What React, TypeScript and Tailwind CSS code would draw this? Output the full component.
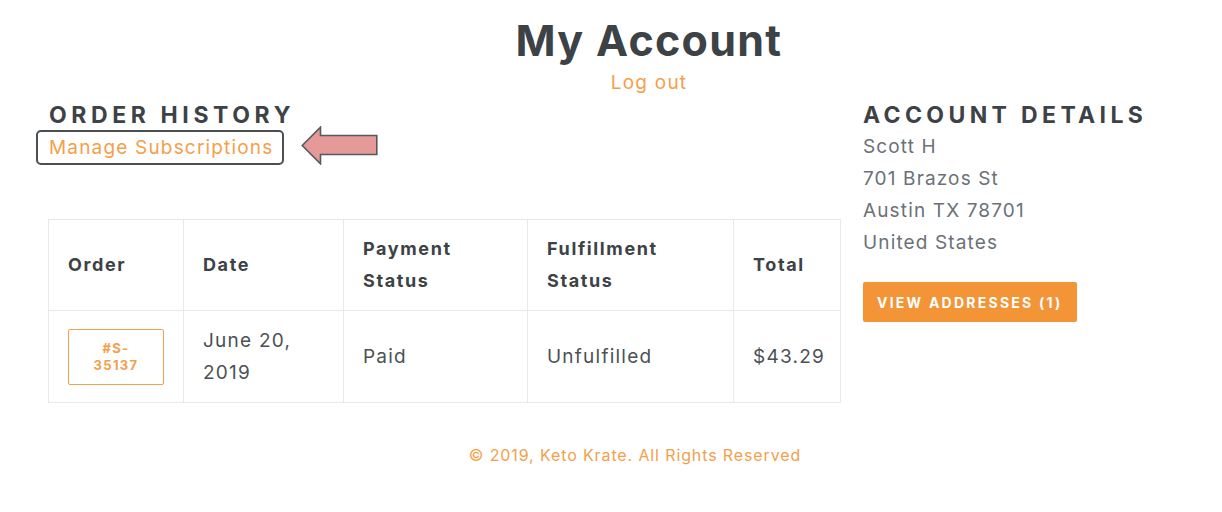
import * as React from "react";

const ORDERS = [
  {
    id: "#S-35137",
    date: "June 20, 2019",
    payment: "Paid",
    fulfillment: "Unfulfilled",
    total: "$43.29",
  },
];

const ADDRESS = ["Scott H", "701 Brazos St", "Austin TX 78701", "United States"];

function PointerArrow(): React.JSX.Element {
  return (
    <svg width="77" height="39" viewBox="0 0 77 39" aria-hidden="true" className="ml-[17px] mt-[-3px]">
      <path
        d="M1.2 19.5 L19.5 1.2 L19.5 9.5 L75.8 9.5 L75.8 28.5 L19.5 28.5 L19.5 37.8 Z"
        fill="#e59a99"
        stroke="#555a5e"
        strokeWidth="1.6"
      />
    </svg>
  );
}

export default function App(): React.JSX.Element {
  return (
    <div className="min-h-[512px] bg-white text-[#3d4246] [font-family:Inter,'Liberation_Sans',sans-serif]">
      <header className="flex flex-col items-center pt-[14px] pl-[76px]">
        <h1 className="text-[43px] font-bold leading-[52px] tracking-[0.03em]">My Account</h1>
        <a className="mt-[4px] text-[19px] leading-[26px] tracking-[0.065em] text-[#f4a04a]">Log out</a>
      </header>

      <main className="flex gap-[22px] pl-[48px] pt-[4px]">
        <section className="w-[793px]">
          <h2 className="pl-[1px] text-[23px] font-bold leading-[30px] tracking-[0.2em]">ORDER HISTORY</h2>
          <div className="mt-[-1px] flex items-center">
            <a className="ml-[-12px] rounded-[5px] border-2 border-[#4a4f53] pl-[11px] pr-[9px] py-[1px] text-[19px] leading-[29px] tracking-[0.062em] text-[#f4a04a]">
              Manage Subscriptions
            </a>
            <PointerArrow />
          </div>

          <table className="mt-[54px] w-full table-fixed border-collapse border border-[#e8e9eb] text-left">
            <thead>
              <tr className="h-[91px] text-[18px] font-bold leading-[32px] tracking-[0.09em]">
                <th className="w-[135px] border border-[#e8e9eb] px-[19px]">Order</th>
                <th className="w-[160px] border border-[#e8e9eb] px-[19px]">Date</th>
                <th className="w-[184px] border border-[#e8e9eb] px-[19px]">
                  Payment
                  <br />
                  Status
                </th>
                <th className="w-[206px] border border-[#e8e9eb] px-[19px]">
                  Fulfillment
                  <br />
                  Status
                </th>
                <th className="border border-[#e8e9eb] px-[19px]">Total</th>
              </tr>
            </thead>
            <tbody>
              {ORDERS.map((order) => (
                <tr key={order.id} className="h-[92px] text-[19px] leading-[32px] tracking-[0.065em] text-[#4b5156]">
                  <td className="border border-[#e8e9eb] px-[19px]">
                    <span className="flex h-[56px] w-[96px] items-center justify-center rounded-[2px] border border-[#f4a04a] text-center text-[13px] font-bold leading-[17px] tracking-[0.1em] text-[#f4a04a]">
                      #S-
                      <br />
                      35137
                    </span>
                  </td>
                  <td className="border border-[#e8e9eb] px-[19px]">
                    June 20,
                    <br />
                    2019
                  </td>
                  <td className="border border-[#e8e9eb] px-[19px]">{order.payment}</td>
                  <td className="border border-[#e8e9eb] px-[19px]">{order.fulfillment}</td>
                  <td className="border border-[#e8e9eb] px-[19px]">{order.total}</td>
                </tr>
              ))}
            </tbody>
          </table>
        </section>

        <aside className="flex-1">
          <h2 className="text-[23px] font-bold leading-[30px] tracking-[0.19em]">ACCOUNT DETAILS</h2>
          <ul className="mt-[1px] text-[19px] leading-[32px] tracking-[0.06em] text-[#6a7177]">
            {ADDRESS.map((line) => (
              <li key={line}>{line}</li>
            ))}
          </ul>
          <button className="mt-[23px] h-[40px] rounded-[2px] bg-[#f39436] px-[14px] text-[14px] font-bold tracking-[0.16em] text-white">
            VIEW ADDRESSES (1)
          </button>
        </aside>
      </main>

      <footer className="w-[1222px] pt-[40px] pl-[48px] text-center">
        <p className="text-[16px] leading-[24px] tracking-[0.055em] text-[#f4a04a]">
          © 2019, Keto Krate. All Rights Reserved
        </p>
      </footer>
    </div>
  );
}
